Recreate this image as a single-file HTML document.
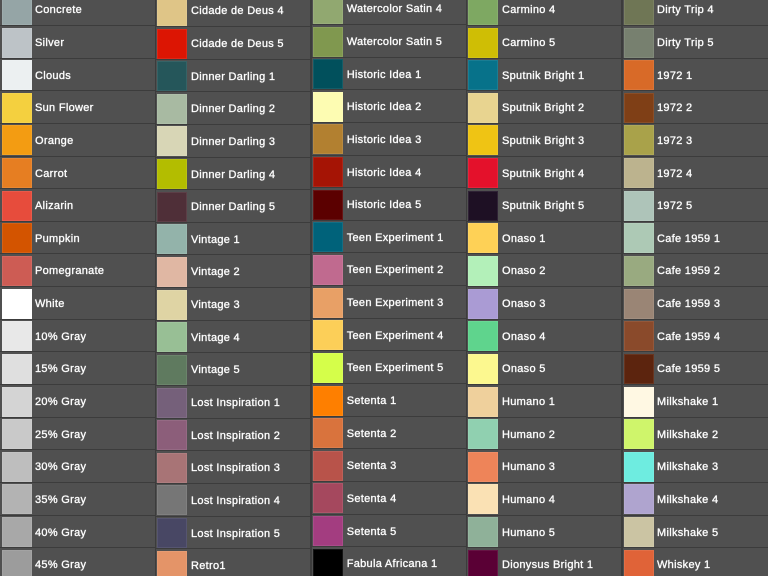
<!DOCTYPE html>
<html style="overflow:hidden;height:576px"><head><meta charset="utf-8">
<style>
html,body{margin:0;padding:0}
body{width:768px;height:576px;overflow:hidden;background:#505050;font-family:"Liberation Sans",sans-serif}
#w{position:absolute;left:0;top:0;width:768px;height:576px;overflow:hidden;background:#505050}
.c{position:absolute;width:155px}
.r{height:31.65px;border-bottom:1px solid #3c3c3c;position:relative;background:#505050;box-sizing:content-box}
.r i{position:absolute;left:2px;top:1.5px;width:30px;height:30px;box-shadow:inset 0 0 0 1px rgba(255,255,255,.08)}
.r b{position:absolute;left:35px;top:0;line-height:34px;font-size:11px;font-weight:400;color:#fff;letter-spacing:.3px;white-space:nowrap;-webkit-text-stroke:.25px #fff;text-shadow:0 0 1px rgba(255,255,255,.35)}
.t b{left:35.7px}
.s{position:absolute;top:0;width:1.5px;height:576px;background:#3c3c3c}
</style></head><body><div id="w">
<div class="c" style="left:0;top:-6.65px">
<div class="r"><i style="background:#95a5a6"></i><b>Concrete</b></div>
<div class="r"><i style="background:#bdc3c7"></i><b>Silver</b></div>
<div class="r"><i style="background:#ecf0f1"></i><b>Clouds</b></div>
<div class="r"><i style="background:#f4d03f"></i><b>Sun Flower</b></div>
<div class="r"><i style="background:#f39c12"></i><b>Orange</b></div>
<div class="r"><i style="background:#e67e22"></i><b>Carrot</b></div>
<div class="r"><i style="background:#e74c3c"></i><b>Alizarin</b></div>
<div class="r"><i style="background:#d35400"></i><b>Pumpkin</b></div>
<div class="r"><i style="background:#cd5c54"></i><b>Pomegranate</b></div>
<div class="r"><i style="background:#ffffff"></i><b>White</b></div>
<div class="r"><i style="background:#e8e8e8"></i><b>10% Gray</b></div>
<div class="r"><i style="background:#dfdfdf"></i><b>15% Gray</b></div>
<div class="r"><i style="background:#d4d4d4"></i><b>20% Gray</b></div>
<div class="r"><i style="background:#c9c9c9"></i><b>25% Gray</b></div>
<div class="r"><i style="background:#bebebe"></i><b>30% Gray</b></div>
<div class="r"><i style="background:#b3b3b3"></i><b>35% Gray</b></div>
<div class="r"><i style="background:#a8a8a8"></i><b>40% Gray</b></div>
<div class="r"><i style="background:#9c9c9c"></i><b>45% Gray</b></div>
</div>
<div class="c t" style="left:155.3px;top:-5.65px">
<div class="r"><i style="background:#dfc587"></i><b>Cidade de Deus 4</b></div>
<div class="r"><i style="background:#dc1503"></i><b>Cidade de Deus 5</b></div>
<div class="r"><i style="background:#25565a"></i><b>Dinner Darling 1</b></div>
<div class="r"><i style="background:#a8baa2"></i><b>Dinner Darling 2</b></div>
<div class="r"><i style="background:#d8d6b6"></i><b>Dinner Darling 3</b></div>
<div class="r"><i style="background:#b3bd00"></i><b>Dinner Darling 4</b></div>
<div class="r"><i style="background:#4f2f38"></i><b>Dinner Darling 5</b></div>
<div class="r"><i style="background:#93b3aa"></i><b>Vintage 1</b></div>
<div class="r"><i style="background:#e0b7a3"></i><b>Vintage 2</b></div>
<div class="r"><i style="background:#dfd4a4"></i><b>Vintage 3</b></div>
<div class="r"><i style="background:#98bf95"></i><b>Vintage 4</b></div>
<div class="r"><i style="background:#5f7a5f"></i><b>Vintage 5</b></div>
<div class="r"><i style="background:#75607a"></i><b>Lost Inspiration 1</b></div>
<div class="r"><i style="background:#8c5e7a"></i><b>Lost Inspiration 2</b></div>
<div class="r"><i style="background:#a87476"></i><b>Lost Inspiration 3</b></div>
<div class="r"><i style="background:#767676"></i><b>Lost Inspiration 4</b></div>
<div class="r"><i style="background:#484764"></i><b>Lost Inspiration 5</b></div>
<div class="r"><i style="background:#e49468"></i><b>Retro1</b></div>
</div>
<div class="c t" style="left:311px;top:-7.65px">
<div class="r"><i style="background:#91a870"></i><b>Watercolor Satin 4</b></div>
<div class="r"><i style="background:#80984f"></i><b>Watercolor Satin 5</b></div>
<div class="r"><i style="background:#01505c"></i><b>Historic Idea 1</b></div>
<div class="r"><i style="background:#fdfcb2"></i><b>Historic Idea 2</b></div>
<div class="r"><i style="background:#b28030"></i><b>Historic Idea 3</b></div>
<div class="r"><i style="background:#a51405"></i><b>Historic Idea 4</b></div>
<div class="r"><i style="background:#5b0000"></i><b>Historic Idea 5</b></div>
<div class="r"><i style="background:#00627a"></i><b>Teen Experiment 1</b></div>
<div class="r"><i style="background:#c06a8f"></i><b>Teen Experiment 2</b></div>
<div class="r"><i style="background:#e8a066"></i><b>Teen Experiment 3</b></div>
<div class="r"><i style="background:#fccf58"></i><b>Teen Experiment 4</b></div>
<div class="r"><i style="background:#d5fe4a"></i><b>Teen Experiment 5</b></div>
<div class="r"><i style="background:#fe7f00"></i><b>Setenta 1</b></div>
<div class="r"><i style="background:#d9733d"></i><b>Setenta 2</b></div>
<div class="r"><i style="background:#b8534a"></i><b>Setenta 3</b></div>
<div class="r"><i style="background:#a5485e"></i><b>Setenta 4</b></div>
<div class="r"><i style="background:#a33d80"></i><b>Setenta 5</b></div>
<div class="r"><i style="background:#000000"></i><b>Fabula Africana 1</b></div>
</div>
<div class="c t" style="left:466.3px;top:-6.65px">
<div class="r"><i style="background:#7ea862"></i><b>Carmino 4</b></div>
<div class="r"><i style="background:#cfbe05"></i><b>Carmino 5</b></div>
<div class="r"><i style="background:#07728a"></i><b>Sputnik Bright 1</b></div>
<div class="r"><i style="background:#e8d490"></i><b>Sputnik Bright 2</b></div>
<div class="r"><i style="background:#efc414"></i><b>Sputnik Bright 3</b></div>
<div class="r"><i style="background:#e4112b"></i><b>Sputnik Bright 4</b></div>
<div class="r"><i style="background:#1e1024"></i><b>Sputnik Bright 5</b></div>
<div class="r"><i style="background:#fed156"></i><b>Onaso 1</b></div>
<div class="r"><i style="background:#b3f0b9"></i><b>Onaso 2</b></div>
<div class="r"><i style="background:#aa9bd4"></i><b>Onaso 3</b></div>
<div class="r"><i style="background:#5fd48d"></i><b>Onaso 4</b></div>
<div class="r"><i style="background:#fcf88f"></i><b>Onaso 5</b></div>
<div class="r"><i style="background:#efd09c"></i><b>Humano 1</b></div>
<div class="r"><i style="background:#90d0b0"></i><b>Humano 2</b></div>
<div class="r"><i style="background:#ee8459"></i><b>Humano 3</b></div>
<div class="r"><i style="background:#fae1b4"></i><b>Humano 4</b></div>
<div class="r"><i style="background:#8fb199"></i><b>Humano 5</b></div>
<div class="r"><i style="background:#5a0035"></i><b>Dionysus Bright 1</b></div>
</div>
<div class="c" style="left:622px;top:-6.65px;width:146px">
<div class="r"><i style="background:#6f7655"></i><b>Dirty Trip 4</b></div>
<div class="r"><i style="background:#77806f"></i><b>Dirty Trip 5</b></div>
<div class="r"><i style="background:#d86a28"></i><b>1972 1</b></div>
<div class="r"><i style="background:#7f3f16"></i><b>1972 2</b></div>
<div class="r"><i style="background:#a9a24a"></i><b>1972 3</b></div>
<div class="r"><i style="background:#bcb38e"></i><b>1972 4</b></div>
<div class="r"><i style="background:#aec4b9"></i><b>1972 5</b></div>
<div class="r"><i style="background:#adc9b5"></i><b>Cafe 1959 1</b></div>
<div class="r"><i style="background:#99aa80"></i><b>Cafe 1959 2</b></div>
<div class="r"><i style="background:#9a8575"></i><b>Cafe 1959 3</b></div>
<div class="r"><i style="background:#8a4a2b"></i><b>Cafe 1959 4</b></div>
<div class="r"><i style="background:#5c240e"></i><b>Cafe 1959 5</b></div>
<div class="r"><i style="background:#fff8e3"></i><b>Milkshake 1</b></div>
<div class="r"><i style="background:#cff56b"></i><b>Milkshake 2</b></div>
<div class="r"><i style="background:#6eece0"></i><b>Milkshake 3</b></div>
<div class="r"><i style="background:#afa4cf"></i><b>Milkshake 4</b></div>
<div class="r"><i style="background:#cbc4a3"></i><b>Milkshake 5</b></div>
<div class="r"><i style="background:#e06338"></i><b>Whiskey 1</b></div>
</div>
<div class="s" style="left:154.5px"></div>
<div class="s" style="left:310px"></div>
<div class="s" style="left:465.5px"></div>
<div class="s" style="left:621px"></div>
</div></body></html>
